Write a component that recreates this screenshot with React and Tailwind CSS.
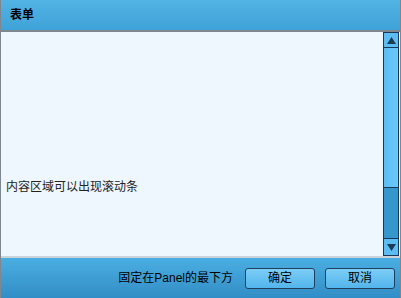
import React from 'react';

export default function App() {
  return (
    <div
      className="w-[401px] h-[298px] flex flex-col border-x border-[#7d8790] bg-[#3d9fd6] overflow-hidden"
      style={{ fontFamily: '"Liberation Sans", "Noto Sans CJK SC", sans-serif' }}
    >
      {/* Header */}
      <div className="h-[32px] shrink-0 flex items-center pl-[9px] bg-gradient-to-b from-[#52b3e4] to-[#3fa2d8] border-b-2 border-[#7d8790]">
        <span className="text-[12px] text-black font-bold">表单</span>
      </div>

      {/* Body */}
      <div className="flex-1 flex bg-[#eef7fd] min-h-0">
        <div className="flex-1 flex items-end pl-[5px] pb-[60px]">
          <span className="text-[12px] text-[#222]">内容区域可以出现滚动条</span>
        </div>
        <div className="w-[16px] flex flex-col border border-[#17385a] mr-px">
          <div className="h-[15px] shrink-0 flex items-center justify-center bg-[#5cbdf2] border-b border-[#17385a]">
            <svg width="9" height="7" viewBox="0 0 9 7"><path d="M4.5 0 L9 7 L0 7 Z" fill="#1e3b55" /></svg>
          </div>
          <div className="flex-1 bg-gradient-to-r from-[#5cbef4] to-[#6cc8f8] border-b border-[#17385a]" />
          <div className="h-[51px] shrink-0 bg-[#3597cb] border-b border-[#17385a]" />
          <div className="h-[16px] shrink-0 flex items-center justify-center bg-[#5cbdf2]">
            <svg width="9" height="7" viewBox="0 0 9 7"><path d="M0 0 L9 0 L4.5 7 Z" fill="#1e3b55" /></svg>
          </div>
        </div>
      </div>

      {/* Footer */}
      <div className="h-[42px] shrink-0 flex items-center justify-end gap-[10px] pr-[5px] bg-gradient-to-b from-[#4aaee1] to-[#328ec6] border-t-2 border-[#c9d3da]">
        <span className="text-[12px] text-black mr-[2px]">固定在Panel的最下方</span>
        <button className="w-[70px] h-[21px] rounded-[3px] border border-[#1f3f5c] bg-gradient-to-b from-[#7ccdf6] to-[#52b5ec] text-[12px] text-black">
          确定
        </button>
        <button className="w-[70px] h-[21px] rounded-[3px] border border-[#1f3f5c] bg-gradient-to-b from-[#7ccdf6] to-[#52b5ec] text-[12px] text-black">
          取消
        </button>
      </div>
    </div>
  );
}
